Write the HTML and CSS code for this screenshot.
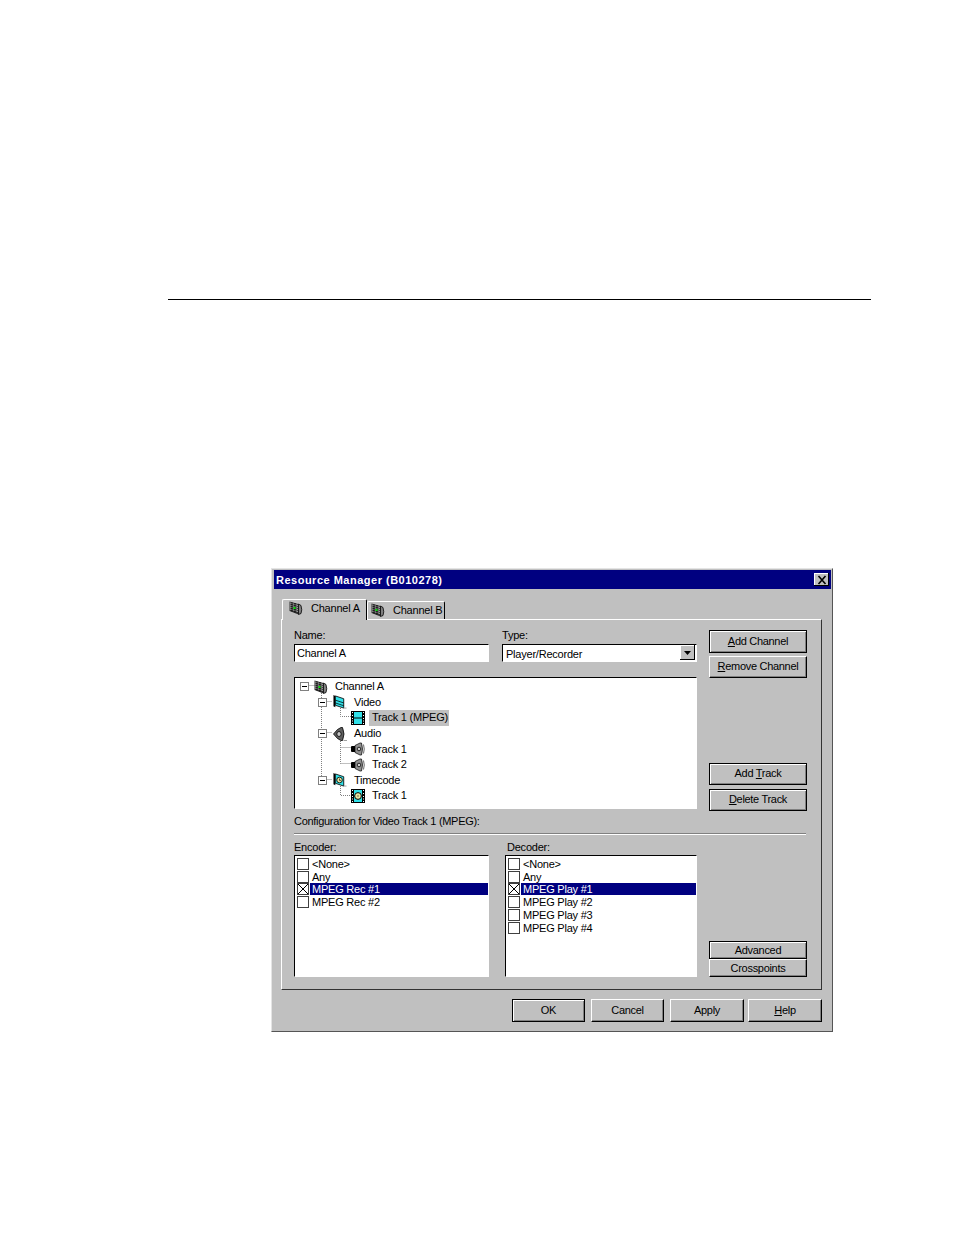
FILE: index.html
```html
<!DOCTYPE html>
<html lang="en">
<head>
<meta charset="utf-8">
<title>Resource Manager</title>
<link rel="stylesheet" href="styles.css">
</head>
<body>
<svg class="defs" width="0" height="0" aria-hidden="true">
  <defs>
    <symbol id="i-channel" viewBox="0 0 14 14">
      <path d="M0.500 0.500L9.500 3v10.500L0.500 10z" fill="#303030"/>
      <path d="M1 2l8 2.500M1 4l8 2.500M1 6l8 2.500M1 8l8 2.500" stroke="#c8c8c8" stroke-width=".8"/>
      <path d="M3 1.500v9M6 2v9.500" stroke="#000" stroke-width=".9"/>
      <path d="M9.500 3l2.500 1.500q1.500 4.500 0 8l-2.500 1z" fill="#808080" stroke="#000" stroke-width=".8"/>
      <rect x="4.500" y="6" width="2" height="2" fill="#00e000"/>
    </symbol>
    <symbol id="i-video" viewBox="0 0 14 15">
      <path d="M0 0l2 1v12l-2-1z" fill="#000"/>
      <path d="M2 1l9 3v10l-9-3z" fill="#30e0e8" stroke="#000" stroke-width=".9"/>
      <path d="M2 5.500l9 3M2 8.500l9 3" stroke="#000" stroke-width=".8"/>
      <path d="M11 14h3" stroke="#a0a0a0"/>
    </symbol>
    <symbol id="i-time" viewBox="0 0 14 15">
      <path d="M0 0l2 1v12l-2-1z" fill="#000"/>
      <path d="M2 1l9 3v10l-9-3z" fill="#30e0e8" stroke="#000" stroke-width=".9"/>
      <circle cx="6.500" cy="7.500" r="3" fill="#e8e4a0" stroke="#000" stroke-width=".9"/>
      <path d="M6.500 6v2h1.500" stroke="#000" stroke-width=".7" fill="none"/>
      <path d="M11 14h3" stroke="#a0a0a0"/>
    </symbol>
    <symbol id="i-film" viewBox="0 0 14 14">
      <rect x="0" y="0" width="14" height="14" fill="#000"/>
      <rect x="3" y="1" width="8" height="5.500" fill="#30e0e8"/>
      <rect x="3" y="7.500" width="8" height="5.500" fill="#30e0e8"/>
      <path d="M1 1.500h1M1 4.500h1M1 7.500h1M1 10h1M1 12.500h1M12 1.500h1M12 4.500h1M12 7.500h1M12 10h1M12 12.500h1" stroke="#fff"/>
    </symbol>
    <symbol id="i-filmclock" viewBox="0 0 14 14">
      <rect x="0" y="0" width="14" height="14" fill="#000"/>
      <rect x="3" y="1" width="8" height="12" fill="#30e0e8"/>
      <circle cx="7" cy="7" r="3.400" fill="#e8e4a0" stroke="#000"/>
      <rect x="6.500" y="6.500" width="1" height="1"/>
      <path d="M1 1.500h1M1 4.500h1M1 7.500h1M1 10h1M1 12.500h1M12 1.500h1M12 4.500h1M12 7.500h1M12 10h1M12 12.500h1" stroke="#fff"/>
    </symbol>
    <symbol id="i-speaker" viewBox="0 0 14 14">
      <rect x="0" y="4" width="5" height="6" rx="1" fill="#000"/>
      <path d="M4 3.500L9 1h1.500q2 6 0 12H9L4 10.500z" fill="#909090" stroke="#000" stroke-width=".7"/>
      <circle cx="8" cy="7" r="1.800" fill="#d0d0d0" stroke="#000" stroke-width=".8"/>
      <path d="M12.500 2.500q1.500 4.500 0 9" fill="none" stroke="#404040" stroke-width=".8"/>
    </symbol>
    <symbol id="i-audio" viewBox="0 0 14 14">
      <path d="M0.500 7l4-4.500 3.500-2h1.500q3 6.500 0 13H8l-3.500-2z" fill="#606060" stroke="#000" stroke-width=".8"/>
      <ellipse cx="6" cy="7" rx="2.200" ry="2.500" fill="#c8c8c8" stroke="#000" stroke-width=".8"/>
      <path d="M10.500 13.500h3.500" stroke="#a0a0a0"/>
    </symbol>
  </defs>
</svg>

<main class="page">
  <hr class="rule">
  <section class="dialog">
    <header class="titlebar">
      <span class="title">Resource Manager (B010278)</span>
      <span class="close"><svg width="12" height="10" viewBox="0 0 12 10"><path d="M2.500 1l7 8M9.500 1l-7 8" stroke="#000" stroke-width="1.600"/></svg></span>
    </header>
    <div class="tabs">
      <div class="tab tab-active"><svg class="ic"><use href="#i-channel"/></svg><span>Channel A</span></div>
      <div class="tab tab-rest"><svg class="ic"><use href="#i-channel"/></svg><span>Channel B</span></div>
    </div>
    <div class="panel">
      <div class="upper">
        <div class="left">
          <div class="fields">
            <div class="field">
              <label class="label">Name:</label>
              <div class="sunken input">Channel A</div>
            </div>
            <div class="field">
              <label class="label">Type:</label>
              <div class="sunken input select">
                <span>Player/Recorder</span>
                <span class="drop"><svg width="7" height="4" viewBox="0 0 7 4"><path d="M0 0h7L3.500 4z"/></svg></span>
              </div>
            </div>
          </div>
          <div class="sunken tree">
            <svg class="guides" width="401" height="130" viewBox="0 0 401 130" aria-hidden="true">
              <path d="M12.500 7.500h7M26.500 13v87M31.500 23.500h6M31.500 54.500h6M31.500 101.500h6M45.500 30v8.500h11M45.500 61v24.500M45.500 69.500h11M45.500 85.500h11M45.500 108v9.500h11" fill="none" stroke="#808080" stroke-dasharray="1 1"/>
            </svg>
            <div class="row lv0"><span class="exp"></span><svg class="ic"><use href="#i-channel"/></svg><span class="txt t0">Channel A</span></div>
            <div class="row lv1"><span class="exp"></span><svg class="ic"><use href="#i-video"/></svg><span class="txt t1">Video</span></div>
            <div class="row lv2"><svg class="ic"><use href="#i-film"/></svg><span class="txt sel">Track 1 (MPEG)</span></div>
            <div class="row lv1"><span class="exp"></span><svg class="ic"><use href="#i-audio"/></svg><span class="txt t1">Audio</span></div>
            <div class="row lv2"><svg class="ic"><use href="#i-speaker"/></svg><span class="txt t2">Track 1</span></div>
            <div class="row lv2"><svg class="ic"><use href="#i-speaker"/></svg><span class="txt t2">Track 2</span></div>
            <div class="row lv1"><span class="exp"></span><svg class="ic"><use href="#i-time"/></svg><span class="txt t1">Timecode</span></div>
            <div class="row lv2"><svg class="ic"><use href="#i-filmclock"/></svg><span class="txt t2">Track 1</span></div>
          </div>
          <div class="config">Configuration for Video Track 1 (MPEG):</div>
        </div>
        <div class="side side-up">
          <div class="stack">
            <div class="btn default tall tall-first"><span><u>A</u>dd Channel</span></div>
            <div class="btn tall"><span><u>R</u>emove Channel</span></div>
          </div>
          <div class="stack stack-track">
            <div class="btn default tall"><span>Add <u>T</u>rack</span></div>
            <div class="btn default tall"><span><u>D</u>elete Track</span></div>
          </div>
        </div>
      </div>
      <div class="sep"></div>
      <div class="lower">
        <div class="lists">
          <div class="field enc">
            <label class="label">Encoder:</label>
            <div class="sunken list">
              <div class="item"><span class="cb"></span><span class="it">&lt;None&gt;</span></div>
              <div class="item"><span class="cb"></span><span class="it">Any</span></div>
              <div class="item on"><span class="cb x"><svg width="10" height="10" viewBox="0 0 10 10"><path d="M0 0l10 10M10 0L0 10" stroke="#000"/></svg></span><span class="it">MPEG Rec #1</span></div>
              <div class="item"><span class="cb"></span><span class="it">MPEG Rec #2</span></div>
            </div>
          </div>
          <div class="field dec">
            <label class="label">Decoder:</label>
            <div class="sunken list">
              <div class="item"><span class="cb"></span><span class="it">&lt;None&gt;</span></div>
              <div class="item"><span class="cb"></span><span class="it">Any</span></div>
              <div class="item on"><span class="cb x"><svg width="10" height="10" viewBox="0 0 10 10"><path d="M0 0l10 10M10 0L0 10" stroke="#000"/></svg></span><span class="it">MPEG Play #1</span></div>
              <div class="item"><span class="cb"></span><span class="it">MPEG Play #2</span></div>
              <div class="item"><span class="cb"></span><span class="it">MPEG Play #3</span></div>
              <div class="item"><span class="cb"></span><span class="it">MPEG Play #4</span></div>
            </div>
          </div>
        </div>
        <div class="side side-low">
          <div class="btn default short"><span>Advanced</span></div>
          <div class="btn short"><span>Crosspoints</span></div>
        </div>
      </div>
    </div>
    <footer class="actions">
      <div class="btn default act"><span>OK</span></div>
      <div class="btn act"><span>Cancel</span></div>
      <div class="btn act act-wide"><span>Apply</span></div>
      <div class="btn act act-wide act-help"><span><u>H</u>elp</span></div>
    </footer>
  </section>
</main>
</body>
</html>
```

FILE: styles.css
```css
* { box-sizing: border-box; }
html, body { margin: 0; padding: 0; background: #fff; }
body { font-family: "Liberation Sans", Arial, sans-serif; font-size: 11px; color: #000; letter-spacing: -0.22px; }
.defs { position: absolute; }

.page { width: 954px; height: 1235px; padding-top: 299px; overflow: hidden; }
.rule { margin: 0 0 0 168px; width: 703px; height: 1px; border: 0; background: #000; }

.dialog {
  margin: 268px 0 0 271px;
  width: 562px;
  height: 464px;
  background: #c0c0c0;
  border: 1px solid;
  border-color: #e4e4e4 #555 #555 #e4e4e4;
  padding: 1px 1px 0 2px;
  display: flex;
  flex-direction: column;
}
.titlebar {
  height: 19px;
  flex: none;
  background: #000080;
  color: #fff;
  font-weight: bold;
  display: flex;
  align-items: center;
  justify-content: space-between;
  padding: 0 2px 0 2px;
  letter-spacing: 0.5px;
}
.close {
  width: 15px;
  height: 13px;
  background: #c0c0c0;
  display: flex;
  align-items: center;
  justify-content: center;
  box-shadow: inset -1px -1px 0 #000, inset 1px 1px 0 #fff;
}

.tabs { display: flex; align-items: flex-end; height: 30px; flex: none; padding-left: 8px; }
.tab {
  display: flex;
  align-items: center;
  white-space: nowrap;
  border: 1px solid;
  border-color: #fff #000 transparent #fff;
  border-bottom: 0;
  border-radius: 2px 2px 0 0;
}
.tab .ic { width: 14px; height: 14px; flex: none; }
.tab-active { width: 85px; height: 21px; padding: 0 0 4px 6px; gap: 8px; position: relative; z-index: 1; margin-bottom: -1px; background: #c0c0c0; }
.tab-rest { width: 78px; height: 18px; padding: 0 0 1px 3px; gap: 8px; }

.panel {
  flex: none;
  margin-left: 7px;
  width: 541px;
  height: 371px;
  border: 1px solid;
  border-color: #fff #333 #333 #fff;
  padding: 9px 14px 0 12px;
}

.upper { display: grid; grid-template-columns: 403px 98px; column-gap: 12px; }
.left { display: flex; flex-direction: column; }
.fields { display: flex; gap: 13px; }
.field { width: 195px; display: flex; flex-direction: column; }
.label { display: block; height: 15px; line-height: 13px; }

.sunken {
  background: #fff;
  border: 1px solid;
  border-color: #000 #fff #fff #000;
}
.input { height: 18px; line-height: 16px; padding-left: 2px; }
.select { display: flex; justify-content: space-between; padding-left: 3px; }
.select span:first-child { line-height: 18px; }
.drop {
  width: 15px;
  height: 15px;
  margin-right: 1px;
  background: #c0c0c0;
  display: flex;
  align-items: center;
  justify-content: center;
  box-shadow: inset -1px -1px 0 #000, inset 1px 1px 0 #fff;
}

.tree { position: relative; margin-top: 15px; height: 132px; padding-top: 1px; }
.guides { position: absolute; left: 0; top: 0; }
.row { display: flex; align-items: center; height: 15.6px; white-space: nowrap; position: relative; }
.lv0 { padding-left: 5px; }
.lv1 { padding-left: 23px; }
.lv2 { padding-left: 56px; }
.exp {
  width: 9px;
  height: 9px;
  border: 1px solid #808080;
  background: #fff;
  display: block;
  position: relative;
  flex: none;
}
.exp::after { content: ""; position: absolute; left: 1px; right: 1px; top: 3px; height: 1px; background: #000; }
.lv0 .ic { margin-left: 5px; }
.lv1 .ic { margin-left: 6px; }
.row .ic { width: 14px; height: 14px; flex: none; }
.txt { line-height: 15px; }
.t0 { margin-left: 7px; }
.t1 { margin-left: 7px; }
.t2 { margin-left: 7px; }
.sel { margin-left: 4px; padding: 0 1px 0 3px; background: #c0c0c0; height: 16px; }

.config { margin-top: 5px; height: 14px; line-height: 14px; letter-spacing: -0.3px; }

.side { display: flex; flex-direction: column; }
.side-up { padding-top: 1px; }
.stack { display: flex; flex-direction: column; gap: 3px; }
.stack-track { margin-top: 85px; gap: 4px; }
.btn {
  background: #c0c0c0;
  border: 1px solid;
  border-color: #fff #000 #000 #fff;
  box-shadow: inset -1px -1px 0 #808080;
  display: flex;
  align-items: center;
  justify-content: center;
  letter-spacing: -0.3px;
  padding-bottom: 2px;
}
.btn.default { border-color: #000; box-shadow: inset 1px 1px 0 #fff, inset -1px -1px 0 #808080; }
.tall { width: 98px; height: 22px; }
.tall-first { height: 23px; }

.sep { margin-top: 5px; width: 512px; height: 2px; background: #808080; border-bottom: 1px solid #fff; }

.lower { display: grid; grid-template-columns: 403px 98px; column-gap: 12px; margin-top: 6px; }
.lists { display: flex; }
.enc { width: 195px; }
.dec { width: 192px; margin-left: 16px; }
.lower .label { height: 14px; }
.dec .label { padding-left: 2px; }
.list { height: 122px; padding-top: 1.400px; }
.item { display: flex; align-items: center; height: 12.8px; padding-left: 2px; }
.cb { width: 12px; height: 12px; border: 1px solid #404040; background: #fff; flex: none; display: flex; }
.it { margin-left: 1px; padding-left: 2px; flex: 1; height: 12px; line-height: 12px; }
.item.on .it { background: #000080; color: #fff; }

.side-low { justify-content: flex-end; }
.short { width: 98px; height: 18px; padding-bottom: 0; }

.actions { display: flex; justify-content: flex-end; gap: 6px; padding-top: 9px; padding-right: 9px; }
.act { width: 73px; height: 23px; }
.act-wide { width: 74px; }
.act-help { margin-left: -2px; }
```
